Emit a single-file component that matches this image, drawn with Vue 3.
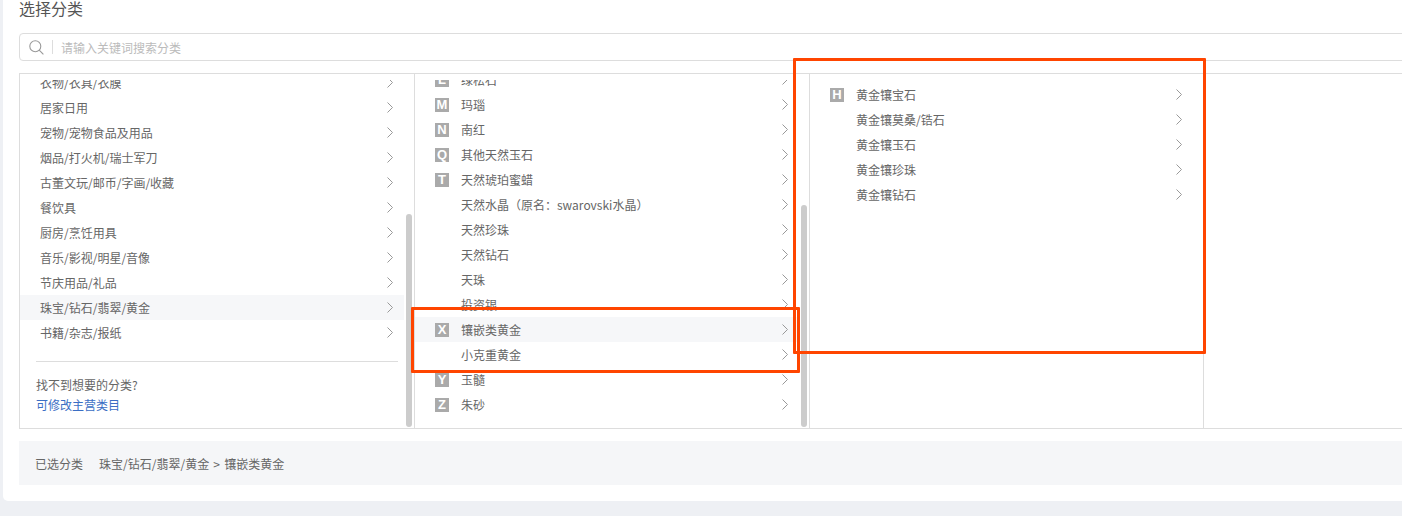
<script setup>
const col1 = ['衣物/衣具/衣膜','居家日用','宠物/宠物食品及用品','烟品/打火机/瑞士军刀','古董文玩/邮币/字画/收藏','餐饮具','厨房/烹饪用具','音乐/影视/明星/音像','节庆用品/礼品','珠宝/钻石/翡翠/黄金','书籍/杂志/报纸']
const col2 = [
  ['L','绿松石'],['M','玛瑙'],['N','南红'],['Q','其他天然玉石'],['T','天然琥珀蜜蜡'],
  ['','天然水晶（原名：swarovski水晶）'],['','天然珍珠'],['','天然钻石'],['','天珠'],['','投资银'],
  ['X','镶嵌类黄金'],['','小克重黄金'],['Y','玉髓'],['Z','朱砂']
]
const col3 = [['H','黄金镶宝石'],['','黄金镶莫桑/锆石'],['','黄金镶玉石'],['','黄金镶珍珠'],['','黄金镶钻石']]
</script>

<template>
  <div class="page">
    <main class="card">
      <h1 class="title">选择分类</h1>
      <div class="search">
        <svg class="search-icon" width="15" height="15" viewBox="0 0 15 15" fill="none" stroke="#999" stroke-width="1.1">
          <circle cx="6.3" cy="6.3" r="5.5" />
          <path d="M10.2 10.2 14.4 14.4" />
        </svg>
        <span class="search-sep"></span>
        <span class="placeholder">请输入关键词搜索分类</span>
      </div>

      <section class="panels">
        <div class="col col-a">
          <div class="viewport viewport-a">
            <ul class="list list-a">
              <li v-for="t in col1" :key="t" class="row" :class="{ active: t === '珠宝/钻石/翡翠/黄金' }">
                <span class="label">{{ t }}</span>
                <svg class="chev" width="6" height="11" viewBox="0 0 6 11" fill="none" stroke="#999"><path d="M.5.5l5 5-5 5" /></svg>
              </li>
            </ul>
          </div>
          <div class="help">
            <p>找不到想要的分类?</p>
            <a>可修改主营类目</a>
          </div>
          <span class="thumb thumb-a"></span>
        </div>

        <div class="col col-b">
          <div class="viewport">
            <ul class="list list-b">
              <li v-for="[k, t] in col2" :key="t" class="row lettered" :class="{ active: t === '镶嵌类黄金' }">
                <span class="badge" :class="{ empty: !k }">{{ k }}</span>
                <span class="label">{{ t }}</span>
                <svg class="chev" width="6" height="11" viewBox="0 0 6 11" fill="none" stroke="#999"><path d="M.5.5l5 5-5 5" /></svg>
              </li>
            </ul>
          </div>
          <span class="thumb thumb-b"></span>
        </div>

        <div class="col col-c">
          <div class="viewport">
            <ul class="list list-c">
              <li v-for="[k, t] in col3" :key="t" class="row lettered">
                <span class="badge" :class="{ empty: !k }">{{ k }}</span>
                <span class="label">{{ t }}</span>
                <svg class="chev" width="6" height="11" viewBox="0 0 6 11" fill="none" stroke="#999"><path d="M.5.5l5 5-5 5" /></svg>
              </li>
            </ul>
          </div>
        </div>

        <div class="col-d"></div>
      </section>

      <footer class="picked">
        <span class="picked-label">已选分类</span>
        <span class="picked-path">珠宝/钻石/翡翠/黄金 &gt; 镶嵌类黄金</span>
      </footer>
    </main>

    <div class="mark mark-one"></div>
    <div class="mark mark-two"></div>
  </div>
</template>

<style scoped>
.page {
  position: relative;
  width: 1402px;
  height: 516px;
  overflow: hidden;
  background: #eef0f4;
  padding-left: 3px;
  box-sizing: border-box;
  font-family: "Noto Sans CJK SC", "Liberation Sans", sans-serif;
  font-size: 12px;
  color: #666;
}
.card {
  width: 1560px;
  height: 501px;
  box-sizing: border-box;
  background: #fff;
  border-radius: 0 0 0 5px;
  padding-left: 16px;
}
.title {
  margin: 0;
  height: 33px;
  font-size: 16px;
  line-height: 17px;
  font-weight: 400;
  color: #555;
}
.search {
  display: flex;
  align-items: center;
  height: 28px;
  box-sizing: border-box;
  border: 1px solid #ddd;
  border-radius: 4px;
  padding-left: 9px;
}
.search-icon {
  flex: none;
}
.search-sep {
  width: 1px;
  height: 14px;
  background: #ddd;
  margin: 0 8px;
}
.placeholder {
  color: #bbb;
}
.panels {
  display: flex;
  margin-top: 12px;
  height: 356px;
  box-sizing: border-box;
  border: 1px solid #ddd;
}
.col {
  position: relative;
  flex: none;
  display: flex;
  flex-direction: column;
  box-sizing: border-box;
  border-right: 1px solid #ddd;
  padding-top: 6px;
}
.col-a, .col-b { width: 395px; }
.col-c { width: 394px; }
.col-d { flex: 1; }
.viewport {
  flex: 1;
  min-height: 0;
  overflow: hidden;
}
.viewport-a {
  flex: none;
  height: 281px;
}
.list {
  margin: 0;
  padding: 0;
  list-style: none;
}
.list-a { margin-top: -10px; }
.list-b { margin-top: -13px; }
.list-c { margin-top: 2px; }
.row {
  display: flex;
  align-items: center;
  height: 25px;
  padding: 0 11px 0 20px;
  margin-right: 10px;
  color: #666;
}
.row.active {
  background: #f6f7f9;
}
.col-c .row {
  margin-right: 0;
  padding-right: 21px;
}
.label {
  flex: 1;
  white-space: nowrap;
}
.chev {
  flex: none;
  margin-top: -1px;
}
.badge {
  flex: none;
  width: 14px;
  height: 14px;
  margin-right: 12px;
  background: #aaa;
  color: #fff;
  font-family: "Liberation Sans", sans-serif;
  font-size: 13px;
  font-weight: 700;
  line-height: 14px;
  text-align: center;
}
.badge.empty {
  background: transparent;
}
.help {
  margin: 0 16px;
  padding: 13px 0 0;
  border-top: 1px solid #ddd;
  line-height: 20px;
}
.help p {
  margin: 0;
}
.help a {
  color: #3b6ec4;
}
.thumb {
  position: absolute;
  right: 2px;
  bottom: 1px;
  width: 6px;
  border-radius: 3px;
  background: #ccc;
}
.thumb-a { height: 213px; }
.thumb-b { height: 222px; }
.picked {
  display: flex;
  gap: 16px;
  align-items: center;
  height: 44px;
  margin-top: 12px;
  padding-left: 16px;
  background: #f5f6f8;
}
.picked-path {
  word-spacing: 1.5px;
}
.mark {
  position: absolute;
  box-sizing: border-box;
  border: 3px solid #ff4500;
  border-radius: 1px;
}
.mark-one {
  left: 411px;
  top: 307px;
  width: 389px;
  height: 66px;
}
.mark-two {
  left: 793px;
  top: 58px;
  width: 413px;
  height: 296px;
}
</style>

<style>
html, body { margin: 0; overflow: hidden; }
</style>
